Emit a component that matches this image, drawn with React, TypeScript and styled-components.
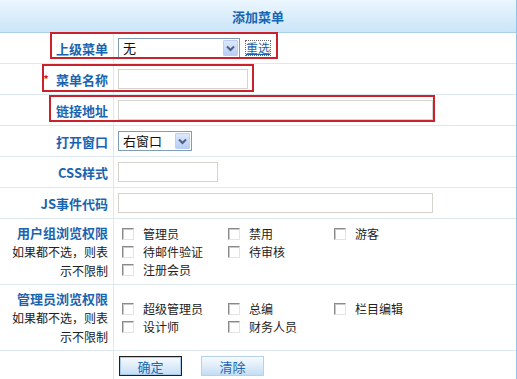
import React from "react";
import styled, { createGlobalStyle } from "styled-components";

const GlobalStyle = createGlobalStyle`
  html, body {
    margin: 0;
    padding: 0;
    background: #fff;
  }
  body {
    font-family: "Noto Sans CJK SC", "DejaVu Sans", sans-serif;
    font-size: 12px;
    color: #222;
  }
`;

const Panel = styled.div`
  width: 517px;
  height: 379px;
  overflow: hidden;
  box-sizing: border-box;
  border-right: 1px solid #8fc3ee;
`;

const Header = styled.div`
  height: 32px;
  border-bottom: 1px solid #a9cfeb;
  background: linear-gradient(#ebf6fe, #cbe5f9);
  display: flex;
  align-items: center;
  justify-content: center;
  font-size: 13px;
  font-weight: bold;
  color: #1766b4;
`;

const Row = styled.div<{ $h?: number }>`
  position: relative;
  display: grid;
  grid-template-columns: 114px 1fr;
  height: ${(p) => p.$h ?? 30}px;
  border-bottom: 1px solid #dce7f0;
`;

const LabelCell = styled.div`
  box-sizing: border-box;
  border-right: 1px solid #dce7f0;
  padding-right: 5px;
  display: flex;
  flex-direction: column;
  align-items: flex-end;
  justify-content: center;
  text-align: right;
`;

const Label = styled.span`
  font-size: 13px;
  font-weight: bold;
  color: #1a64b0;
  line-height: 19px;
  white-space: nowrap;
`;

const Note = styled.span`
  font-size: 12px;
  line-height: 19px;
  color: #222;
  white-space: nowrap;
`;

const Required = styled.span`
  color: #d0021b;
  margin-right: 7px;
  font-weight: normal;
`;

const FieldCell = styled.div`
  display: flex;
  align-items: center;
  padding-left: 4px;
  gap: 6px;
`;

const TextInput = styled.input<{ $w: number }>`
  box-sizing: border-box;
  width: ${(p) => p.$w}px;
  height: 20px;
  border: 1px solid #d6d3cd;
  background: #fff;
  outline: none;
  padding: 0 3px;
  font: inherit;
`;

const SelectBox = styled.div<{ $w: number }>`
  box-sizing: border-box;
  width: ${(p) => p.$w}px;
  height: 20px;
  border: 1px solid #7f9db9;
  background: #fff;
  display: flex;
  align-items: stretch;
  padding: 1px;
`;

const SelectValue = styled.span`
  flex: 1;
  display: flex;
  align-items: center;
  padding-left: 3px;
  font-size: 13px;
  line-height: 16px;
  color: #111;
`;

const ArrowBox = styled.span`
  width: 15px;
  box-sizing: border-box;
  border: 1px solid #bccff3;
  border-radius: 1px;
  background: linear-gradient(#dde8fc, #b8cef6);
  display: flex;
  align-items: center;
  justify-content: center;
`;

const ResetLink = styled.a`
  font-size: 12px;
  color: #1b5fa8;
  text-decoration: underline;
  outline: 1px dotted #666;
  outline-offset: 0;
  line-height: 14px;
  cursor: pointer;
`;

const Highlight = styled.div<{ $l: number; $t: number; $w: number; $h: number }>`
  position: absolute;
  left: ${(p) => p.$l}px;
  top: ${(p) => p.$t}px;
  width: ${(p) => p.$w}px;
  height: ${(p) => p.$h}px;
  box-sizing: border-box;
  border: 2px solid #c9222c;
  pointer-events: none;
`;

const CheckGroup = styled.div`
  display: flex;
  flex-direction: column;
  justify-content: center;
  padding-left: 8px;
`;

const CheckLine = styled.div`
  display: grid;
  grid-template-columns: repeat(3, 106px);
  height: 18px;
`;

const CheckItem = styled.label`
  display: flex;
  align-items: center;
  font-size: 12px;
  color: #222;
  white-space: nowrap;
`;

const Box = styled.span`
  box-sizing: border-box;
  width: 12px;
  height: 12px;
  margin-right: 9px;
  background: #fff;
  border-top: 1px solid #8a8a8a;
  border-left: 1px solid #8a8a8a;
  border-right: 1px solid #e4e4e4;
  border-bottom: 1px solid #e4e4e4;
  box-shadow: inset 1px 1px 0 #c8c8c8;
`;

const ButtonBar = styled.div`
  display: flex;
  align-items: center;
  gap: 19px;
  padding-left: 5px;
`;

const Button = styled.button<{ $primary?: boolean }>`
  box-sizing: border-box;
  width: 63px;
  height: 20px;
  padding: 0;
  font-family: inherit;
  font-size: 13px;
  color: #1b67b3;
  cursor: pointer;
  border: 1px solid ${(p) => (p.$primary ? "#1f1f1f" : "#b6d2ea")};
  box-shadow: ${(p) => (p.$primary ? "inset 0 0 0 1px #a9c9e8" : "none")};
  background: linear-gradient(#f6fbff 0%, #dcebf9 55%, #c3ddf4 100%);
`;

const Chevron = () => (
  <svg width="9" height="7" viewBox="0 0 9 7">
    <path d="M1 1.5 L4.5 5 L8 1.5" fill="none" stroke="#4d6185" strokeWidth="2" />
  </svg>
);

const Select = ({ width, value }: { width: number; value: string }) => (
  <SelectBox $w={width}>
    <SelectValue>{value}</SelectValue>
    <ArrowBox>
      <Chevron />
    </ArrowBox>
  </SelectBox>
);

const Checks = ({ lines }: { lines: string[][] }) => (
  <CheckGroup>
    {lines.map((line, i) => (
      <CheckLine key={i}>
        {line.map((text) => (
          <CheckItem key={text}>
            <Box />
            {text}
          </CheckItem>
        ))}
      </CheckLine>
    ))}
  </CheckGroup>
);

const userGroups = [["管理员", "禁用", "游客"], ["待邮件验证", "待审核"], ["注册会员"]];
const adminGroups = [["超级管理员", "总编", "栏目编辑"], ["设计师", "财务人员"]];

const App = () => {
  return (
    <>
      <GlobalStyle />
      <Panel>
        <Header>添加菜单</Header>

        <Row>
          <LabelCell>
            <Label>上级菜单</Label>
          </LabelCell>
          <FieldCell>
            <Select width={122} value="无" />
            <ResetLink>重选</ResetLink>
          </FieldCell>
          <Highlight $l={50} $t={-1} $w={228} $h={27} />
        </Row>

        <Row>
          <LabelCell>
            <Label>
              <Required>*</Required>菜单名称
            </Label>
          </LabelCell>
          <FieldCell>
            <TextInput $w={130} />
          </FieldCell>
          <Highlight $l={42} $t={0} $w={212} $h={28} />
        </Row>

        <Row>
          <LabelCell>
            <Label>链接地址</Label>
          </LabelCell>
          <FieldCell>
            <TextInput $w={315} />
          </FieldCell>
          <Highlight $l={49} $t={0} $w={386} $h={27} />
        </Row>

        <Row>
          <LabelCell>
            <Label>打开窗口</Label>
          </LabelCell>
          <FieldCell>
            <Select width={74} value="右窗口" />
          </FieldCell>
        </Row>

        <Row>
          <LabelCell>
            <Label>CSS样式</Label>
          </LabelCell>
          <FieldCell>
            <TextInput $w={100} />
          </FieldCell>
        </Row>

        <Row>
          <LabelCell>
            <Label>JS事件代码</Label>
          </LabelCell>
          <FieldCell>
            <TextInput $w={315} />
          </FieldCell>
        </Row>

        <Row $h={65}>
          <LabelCell>
            <Label>用户组浏览权限</Label>
            <Note>如果都不选，则表</Note>
            <Note>示不限制</Note>
          </LabelCell>
          <Checks lines={userGroups} />
        </Row>

        <Row $h={65}>
          <LabelCell>
            <Label>管理员浏览权限</Label>
            <Note>如果都不选，则表</Note>
            <Note>示不限制</Note>
          </LabelCell>
          <Checks lines={adminGroups} />
        </Row>

        <Row>
          <LabelCell />
          <ButtonBar>
            <Button $primary>确定</Button>
            <Button>清除</Button>
          </ButtonBar>
        </Row>
      </Panel>
    </>
  );
};

export default App;
